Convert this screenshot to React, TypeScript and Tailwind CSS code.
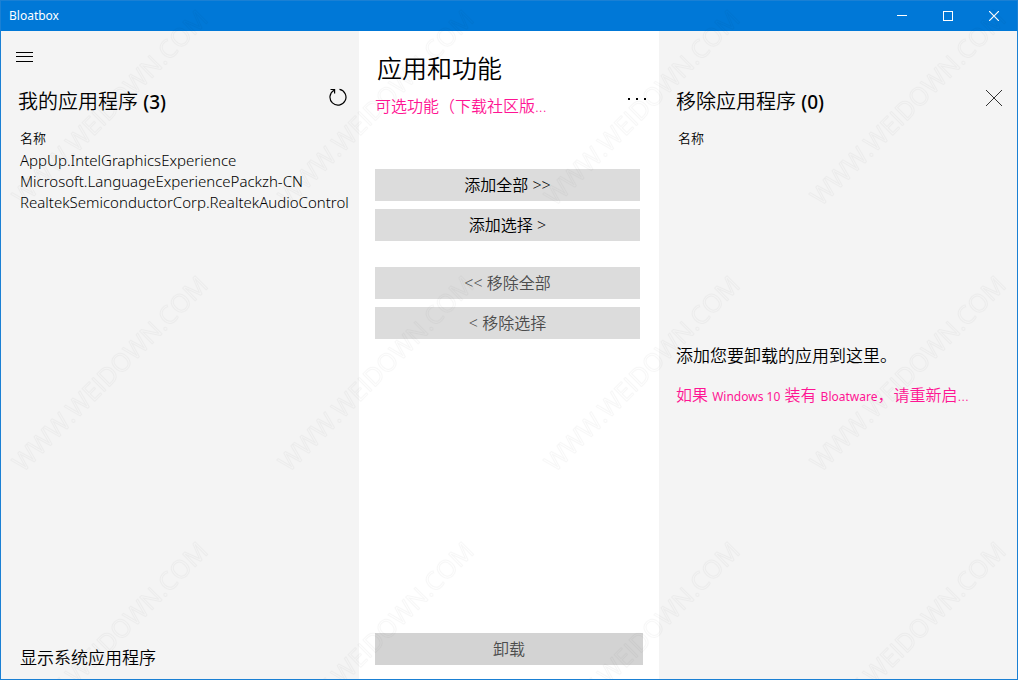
import React, { useState } from 'react';

const installedApps = [
  'AppUp.IntelGraphicsExperience',
  'Microsoft.LanguageExperiencePackzh-CN',
  'RealtekSemiconductorCorp.RealtekAudioControl',
];

function TitleBar() {
  return (
    <header className="flex h-[30px] items-center justify-between bg-[#0078d7] text-white">
      <span className="pl-2 font-['Noto_Sans',sans-serif] text-[12px] leading-4 font-normal">Bloatbox</span>
      <div className="flex h-full">
        <button aria-label="最小化" className="flex w-[46px] items-center justify-center">
          <svg width="10" height="10" stroke="currentColor" shapeRendering="crispEdges"><path d="M0 4.5H10" /></svg>
        </button>
        <button aria-label="最大化" className="flex w-[46px] items-center justify-center">
          <svg width="10" height="10" fill="none" stroke="currentColor" shapeRendering="crispEdges"><path d="M.5 .5H9.5V9.5H.5Z" /></svg>
        </button>
        <button aria-label="关闭" className="flex w-[46px] items-center justify-center">
          <svg width="10" height="10" stroke="currentColor" strokeWidth="1.2"><path d="M0 0L10 10M10 0L0 10" /></svg>
        </button>
      </div>
    </header>
  );
}

function AppTable({ apps }: { apps: string[] }) {
  const [selected, setSelected] = useState<string[]>([]);

  const toggle = (app: string) => {
    setSelected(selected.includes(app) ? selected.filter((a) => a !== app) : [...selected, app]);
  };

  return (
    <table className="w-full text-left">
      <thead>
        <tr>
          <th className="h-6 p-0 text-[13px] leading-6 font-[350]">名称</th>
        </tr>
      </thead>
      <tbody>
        {apps.map((app) => (
          <tr key={app} aria-selected={selected.includes(app)} onClick={() => toggle(app)}>
            <td className="p-0 font-['Noto_Sans',sans-serif] text-[15px] leading-[21px] font-light whitespace-nowrap">{app}</td>
          </tr>
        ))}
      </tbody>
    </table>
  );
}

function Watermark() {
  return (
    <svg className="pointer-events-none absolute inset-0 h-full w-full" aria-hidden="true">
      <defs>
        <pattern id="watermark" width="266" height="266" patternUnits="userSpaceOnUse">
          <text
            transform="translate(22 206) rotate(-45)"
            className="fill-none stroke-black/3 font-['Open_Sans',sans-serif] text-[25px] font-normal"
            strokeWidth="1"
            strokeLinejoin="round"
          >
            WWW.WEIDOWN.COM
          </text>
        </pattern>
      </defs>
      <rect width="100%" height="100%" fill="url(#watermark)" />
    </svg>
  );
}

export default function App() {
  return (
    <div className="relative flex min-h-screen flex-col border border-[#1a80d4] bg-white font-['Open_Sans','Noto_Sans_CJK_SC',sans-serif] font-[350] text-black">
      <TitleBar />

      <main className="grid flex-1 grid-cols-[1fr_300px_1fr]">
        <section className="flex min-w-0 flex-col bg-[#f4f4f4] pt-[15px] pb-[7px]">
          <button aria-label="菜单" className="ml-[15px] flex h-5 w-[18px] items-center">
            <svg width="18" height="11" stroke="currentColor" shapeRendering="crispEdges">
              <path d="M0 1.5H17M0 5.5H17M0 10.5H17" />
            </svg>
          </button>
          <div className="mt-[22px] flex items-start justify-between pr-3 pl-[17px]">
            <h2 className="text-[20px] leading-7">
              我的应用程序 <span className="font-['Noto_Sans',sans-serif] text-[19px] font-medium">(3)</span>
            </h2>
            <button aria-label="刷新" className="h-[18px] w-[18px]">
              <svg width="18" height="18" fill="none" stroke="currentColor" strokeWidth="1.2">
                <path d="M10.5 1.3A8 8 0 1 1 5 2.2M1.5 1.5H5.6V5.6" />
              </svg>
            </button>
          </div>
          <div className="mt-[10px] pl-[19px]">
            <AppTable apps={installedApps} />
          </div>
          <button className="mt-auto ml-[19px] self-start text-[17px] leading-7">显示系统应用程序</button>
        </section>

        <section className="flex min-w-0 flex-col px-4 pt-[19px] pb-[14px]">
          <h1 className="pl-0.5 text-[25px] leading-9">应用和功能</h1>
          <div className="flex h-10 items-start justify-between">
            <a href="#features" className="pt-2 text-[16px] leading-6 text-[#ff1493]">可选功能（下载社区版...</a>
            <button aria-label="更多" className="-mr-1 flex h-[26px] w-5 items-center">
              <svg width="20" height="2" fill="currentColor">
                <path d="M1 0h2v2H1zM9 0h2v2H9zM17 0h2v2H17z" />
              </svg>
            </button>
          </div>
          <div className="mt-[43px] flex flex-col gap-2 pr-[3px] text-[16px] leading-8">
            <button className="h-8 bg-[#dcdcdc]">添加全部 &gt;&gt;</button>
            <button className="h-8 bg-[#dcdcdc]">添加选择 &gt;</button>
            <button disabled className="mt-[18px] h-8 bg-[#dcdcdc] text-[#4c4c4c]">&lt;&lt; 移除全部</button>
            <button disabled className="h-8 bg-[#dcdcdc] text-[#4c4c4c]">&lt; 移除选择</button>
          </div>
          <button disabled className="mt-auto h-8 bg-[#d3d3d3] text-[16px] leading-8 text-[#4c4c4c]">卸载</button>
        </section>

        <section className="flex min-w-0 flex-col bg-[#f4f4f4] pt-[57px] pb-2">
          <div className="flex items-start justify-between pr-[15px] pl-[17px]">
            <h2 className="text-[20px] leading-7">
              移除应用程序 <span className="font-['Noto_Sans',sans-serif] text-[19px] font-medium">(0)</span>
            </h2>
            <button aria-label="清除" className="mt-0.5 h-4 w-4">
              <svg width="16" height="16" stroke="#333" strokeWidth="1"><path d="M0 0L16 16M16 0L0 16" /></svg>
            </button>
          </div>
          <div className="mt-[10px] pl-[19px]">
            <AppTable apps={[]} />
          </div>
          <div className="mt-48 flex flex-col gap-3 pl-[17px]">
            <p className="text-[17px] leading-7">添加您要卸载的应用到这里。</p>
            <a href="#restart" className="text-[16px] leading-[26px] whitespace-nowrap text-[#ff1493]">
              如果 <span className="font-['Noto_Sans',sans-serif] text-[12px] font-normal">Windows 10</span> 装有{' '}
              <span className="font-['Noto_Sans',sans-serif] text-[12px] font-normal">Bloatware</span>，请重新启...
            </a>
          </div>
        </section>
      </main>

      <Watermark />
    </div>
  );
}
